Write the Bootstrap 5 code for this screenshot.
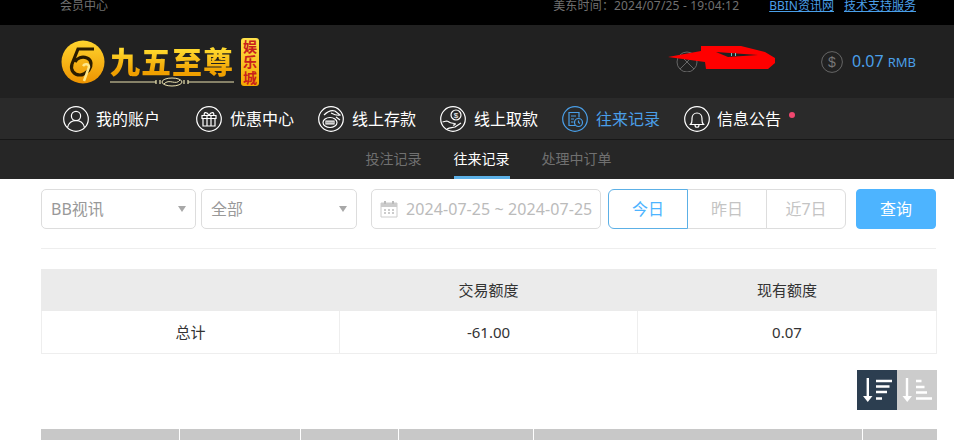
<!DOCTYPE html>
<html lang="zh-CN">
<head>
<meta charset="utf-8">
<title>会员中心</title>
<link href="https://cdn.jsdelivr.net/npm/bootstrap@5.3.0/dist/css/bootstrap.min.css" rel="stylesheet">
<style>
html,body{height:440px;overflow:hidden;background:#fff}
body{font-family:"Noto Sans","Noto Sans CJK SC",sans-serif;font-size:14px;color:#333}
.topbar{height:25px;background:#000;color:#707070;font-size:12px;line-height:12px;padding:0 38px 0 60px;overflow:hidden}
.topbar a{color:#4a9fe8;margin-left:10px}
.top-time{margin-right:20px;letter-spacing:.17px}
.headbar{height:73px;background:#212121;padding:0 38px 0 61px}
.brand-name{font-size:30px;line-height:34px;font-weight:900;letter-spacing:1px;background:linear-gradient(#ffd92e 20%,#f0a000 85%);-webkit-background-clip:text;background-clip:text;color:transparent;white-space:nowrap;font-family:"Noto Sans CJK SC",sans-serif}
.brand-main{margin-left:5px;margin-top:6px}
.brand-tag{width:18px;height:48px;margin-left:7px;border-radius:3px;background:linear-gradient(#ffe14a,#f4a800);color:#c8201c;font-size:14px;line-height:15.500px;font-weight:700;text-align:center;padding-top:1px}
.user-box{width:100px;height:24px;margin-right:43px}
.scribble{position:absolute;left:-10px;top:-4px}
.money{color:#4a9fe8;font-size:16px;line-height:22px;white-space:nowrap}
.money small{font-size:13px;margin-left:4px}
.money-ico{margin-right:9px}
.mainnav{height:42px;background:#2a2a2a;border-bottom:1px solid #171717;padding-left:63px}
.nav-entry{width:122px;color:#fff;font-size:16px;text-decoration:none;white-space:nowrap}
.nav-entry:hover{color:#fff}
.nav-entry svg{margin-right:8px;flex:none}
.nav-entry:first-child svg,.nav-entry:last-child svg{margin-right:7px}
.nav-first{width:133px}
.nav-on,.nav-on:hover{color:#4a9fe8}
.nav-dot{position:absolute;left:105px;top:6px;width:6px;height:6px;border-radius:50%;background:#f0476f}
.subnav{height:39px;background:#262626;padding-left:23px;gap:32px}
.sub-entry{height:39px;line-height:37px;color:#707070;font-size:14px;text-decoration:none}
.sub-on,.sub-on:hover{color:#fff;border-bottom:3px solid #5cb0e6}
.main-area{padding:10px 17px 0 41px}
.pick{height:40px;border-color:#ddd;border-radius:5px;color:#999;font-size:16px;padding:0 9px;background-image:url("data:image/svg+xml,%3Csvg xmlns='http://www.w3.org/2000/svg' width='8' height='6'%3E%3Cpath d='M0 0h8L4 6z' fill='%23a8a8a8'/%3E%3C/svg%3E");background-size:8px 6px;background-position:right 9px center}
.pick-a{width:155px;margin-right:5px}
.pick-b{width:156px;margin-right:14px}
.date-box{width:230px;height:40px;border:1px solid #ddd;border-radius:5px;color:#bbb;font-size:16px;padding:0 8px;white-space:nowrap;margin-right:7px;letter-spacing:.08px}
.date-box svg{margin-right:8px;flex:none}
.day-group{width:238px;height:40px;margin-right:10px}
.day-group .btn{flex:1 1 0;font-size:16px;color:#c4c4c4;border-color:#ddd;padding:0;background:#fff;line-height:38px}
.day-group .btn.day-on{color:#4db4ff;border-color:#5cb0e6;z-index:1}
.go-btn,.go-btn:hover{width:80px;height:40px;padding:0;background:#4db4ff;border-color:#4db4ff;color:#fff;font-size:16px;border-radius:4px}
.rule{height:1px;background:#eee;margin:19px 1px 20px 0;width:895px}
.sum-table{table-layout:fixed;width:896px;margin:0;color:#333;border-collapse:collapse}
.sum-table th,.sum-table td{height:43px;padding:0;text-align:center;vertical-align:middle;font-weight:400;font-size:15px;border:1px solid #eee;box-shadow:none}
.sum-table th{height:41px;background:#ebebeb;border-color:#ebebeb}
.sum-c1{width:298px}.sum-c2{width:298px}
.sort-row{margin:16px 0 19px;width:896px}
.sort-btn{width:40px;height:40px;border:0;padding:0;display:block}
.sort-dark{background:#2c3e50}
.sort-light{background:#ccc}
.list-table{table-layout:fixed;width:896px;margin:0;border-collapse:collapse}
.list-table th{background:#c8c8c8;height:40px;padding:0;border:0;border-right:1px solid #fff}
.list-table th:last-child{border-right:0}
.l1{width:138px}.l2{width:121px}.l3{width:98px}.l4{width:135px}.l5{width:329px}
</style>
</head>
<body>
<div class="topbar d-flex justify-content-between">
  <span>会员中心</span>
  <span class="d-flex"><span class="top-time">美东时间：2024/07/25 - 19:04:12</span><a href="#">BBIN资讯网</a><a href="#">技术支持服务</a></span>
</div>
<header class="headbar d-flex align-items-center justify-content-between">
  <div class="d-flex align-items-center">
    <svg width="44" height="44" viewBox="0 0 44 44"><defs><linearGradient id="g1" x1="0" y1="0" x2="0" y2="1"><stop offset="0" stop-color="#ffd52e"/><stop offset="1" stop-color="#ee9300"/></linearGradient></defs><circle cx="22" cy="22" r="21.500" fill="url(#g1)"/><path d="M33 9H17l-6 15c-2 6 2 11 8 11 4 0 6-2 9-5 3-4 3-10-2-12-5-2-10 0-12 4" fill="none" stroke="#2a1c00" stroke-width="3.200"/><path d="M22 26c2-3 6-2 6 1l-5 14" fill="none" stroke="#ffe88a" stroke-width="2.500"/></svg>
    <div class="brand-main">
      <div class="brand-name">九五至尊</div>
      <svg class="d-block" width="124" height="10" viewBox="0 0 124 10"><path d="M0 5h46M78 5h46" stroke="#ece3b0" stroke-width="1"/><path d="M46 3v4M50 3v4M74 3v4M78 3v4" stroke="#ece3b0" stroke-width="1.200"/><ellipse cx="62" cy="5" rx="10" ry="4" fill="none" stroke="#ece3b0"/><path d="M54 7c5-6 12 2 16-4" fill="none" stroke="#ece3b0"/></svg>
    </div>
    <div class="brand-tag">娱乐城</div>
  </div>
  <div class="d-flex align-items-center">
    <div class="user-box position-relative">
      <svg class="scribble" width="110" height="26" viewBox="0 0 110 26"><circle cx="19" cy="16" r="10" fill="none" stroke="#666"/><path d="M12 9l14 14M26 9L12 23" stroke="#666"/><path d="M0 11L33 5V0h40l24 6 10 6v5l-7 6H38l-1-7z" fill="#f00"/><path d="M48 6l42 3-30 2z" fill="#222"/><path d="M63 7h1v3h-1zM67 7h1v3h-1z" fill="#6cc"/></svg>
    </div>
    <svg class="money-ico" width="22" height="22" viewBox="0 0 22 22"><circle cx="11" cy="11" r="10.400" fill="none" stroke="#666"/><text x="11" y="16" text-anchor="middle" font-size="14" fill="#777" font-family="Liberation Sans">$</text></svg>
    <span class="money">0.07<small>RMB</small></span>
  </div>
</header>
<nav class="mainnav d-flex align-items-center">
  <a class="nav-entry nav-first d-flex align-items-center" href="#"><svg width="26" height="26" viewBox="0 0 26 26" fill="none" stroke="currentColor" stroke-width="1.200"><circle cx="13" cy="13" r="12.300"/><circle cx="13" cy="10" r="4.600"/><path d="M4.500 21.500c1-4 4-7 8.500-7s7.500 3 8.500 7"/></svg>我的账户</a>
  <a class="nav-entry d-flex align-items-center" href="#"><svg width="26" height="26" viewBox="0 0 26 26" fill="none" stroke="currentColor" stroke-width="1.200"><circle cx="13" cy="13" r="12.300"/><path d="M6 9.500h14v3H6zM7 12.500h12V20H7zM11 9.500V20M15 9.500V20M13 9.500c-2-4-6-3.500-4.500 0M13 9.500c2-4 6-3.500 4.500 0"/></svg>优惠中心</a>
  <a class="nav-entry d-flex align-items-center" href="#"><svg width="26" height="26" viewBox="0 0 26 26" fill="none" stroke="currentColor" stroke-width="1.200"><circle cx="13" cy="13" r="12.300"/><path d="M6 9c4-4 8-5 11-4l5 4c-3 1-7-1-9-2M18 11l4 3"/><ellipse cx="12" cy="16.500" rx="7" ry="5"/><path d="M8 15h8v3H8zM10 15v3M12 15v3M14 15v3"/></svg>线上存款</a>
  <a class="nav-entry d-flex align-items-center" href="#"><svg width="26" height="26" viewBox="0 0 26 26" fill="none" stroke="currentColor" stroke-width="1.200"><circle cx="13" cy="13" r="12.300"/><circle cx="16" cy="9" r="5"/><text x="16" y="12" text-anchor="middle" font-size="8" fill="currentColor" stroke="none" font-family="Liberation Sans">$</text><path d="M2.500 16l4-1c2 0 3 2 5 2l3 .5c2 0 0 2-1.500 1.500M7 23c3-2 5-1 8-2l6-4"/></svg>线上取款</a>
  <a class="nav-entry nav-on d-flex align-items-center" href="#"><svg width="26" height="26" viewBox="0 0 26 26" fill="none" stroke="currentColor" stroke-width="1.200"><circle cx="13" cy="13" r="12.300"/><path d="M13 19.500H7V6.500h10v5M9 10h5M9 13h3M9 16h2.500"/><circle cx="16.500" cy="16.500" r="4"/><path d="M16.500 14.500v2l1.500 1"/></svg>往来记录</a>
  <a class="nav-entry position-relative d-flex align-items-center" href="#"><svg width="26" height="26" viewBox="0 0 26 26" fill="none" stroke="currentColor" stroke-width="1.200"><circle cx="13" cy="13" r="12.300"/><path d="M6.500 18.500c2-2 1.500-4 1.500-6 0-3 2-5.500 5-5.500s5 2.500 5 5.500c0 2-.5 4 1.500 6zM11 19c0 3 4 3 4 0"/></svg>信息公告<span class="nav-dot"></span></a>
</nav>
<nav class="subnav d-flex justify-content-center">
  <a class="sub-entry" href="#">投注记录</a>
  <a class="sub-entry sub-on" href="#">往来记录</a>
  <a class="sub-entry" href="#">处理中订单</a>
</nav>
<main class="main-area">
  <div class="d-flex">
    <select class="form-select pick pick-a"><option>BB视讯</option></select>
    <select class="form-select pick pick-b"><option>全部</option></select>
    <div class="date-box d-flex align-items-center"><svg width="18" height="18" viewBox="0 0 18 18"><path d="M1 3h16v14H1z" fill="none" stroke="#ccc"/><path d="M1 3h16v4H1z" fill="#ccc"/><path d="M5 1v3M13 1v3" stroke="#bbb" stroke-width="2"/><path d="M4 10h2M8 10h2M12 10h2M4 13h2M8 13h2M12 13h2" stroke="#ccc" stroke-width="2"/></svg>2024-07-25 ~ 2024-07-25</div>
    <div class="btn-group day-group"><button class="btn day-on">今日</button><button class="btn">昨日</button><button class="btn">近7日</button></div>
    <button class="btn go-btn">查询</button>
  </div>
  <div class="rule"></div>
  <table class="table sum-table">
    <thead><tr><th class="sum-c1"></th><th class="sum-c2">交易额度</th><th>现有额度</th></tr></thead>
    <tbody><tr><td>总计</td><td>-61.00</td><td>0.07</td></tr></tbody>
  </table>
  <div class="sort-row d-flex justify-content-end">
    <button class="sort-btn sort-dark"><svg class="d-block" width="40" height="40" viewBox="0 0 40 40"><path d="M10.800 8v20" stroke="#fff" stroke-width="2.400"/><path d="M6 26h9.500l-4.750 6z" fill="#fff"/><path d="M19 11h16M19 16.500h13.500M19 22h11M19 28.500h6" stroke="#fff" stroke-width="2.400"/></svg></button>
    <button class="sort-btn sort-light"><svg class="d-block" width="40" height="40" viewBox="0 0 40 40"><path d="M10 8v20" stroke="#fff" stroke-width="2.400"/><path d="M5.500 26h9.500l-4.750 6z" fill="#fff"/><path d="M19 11h5.500M19 17h8.500M19 22.500h11M19 28.500h16" stroke="#fff" stroke-width="2.400"/></svg></button>
  </div>
  <table class="table list-table"><thead><tr><th class="l1"></th><th class="l2"></th><th class="l3"></th><th class="l4"></th><th class="l5"></th><th></th></tr></thead></table>
</main>
</body>
</html>
